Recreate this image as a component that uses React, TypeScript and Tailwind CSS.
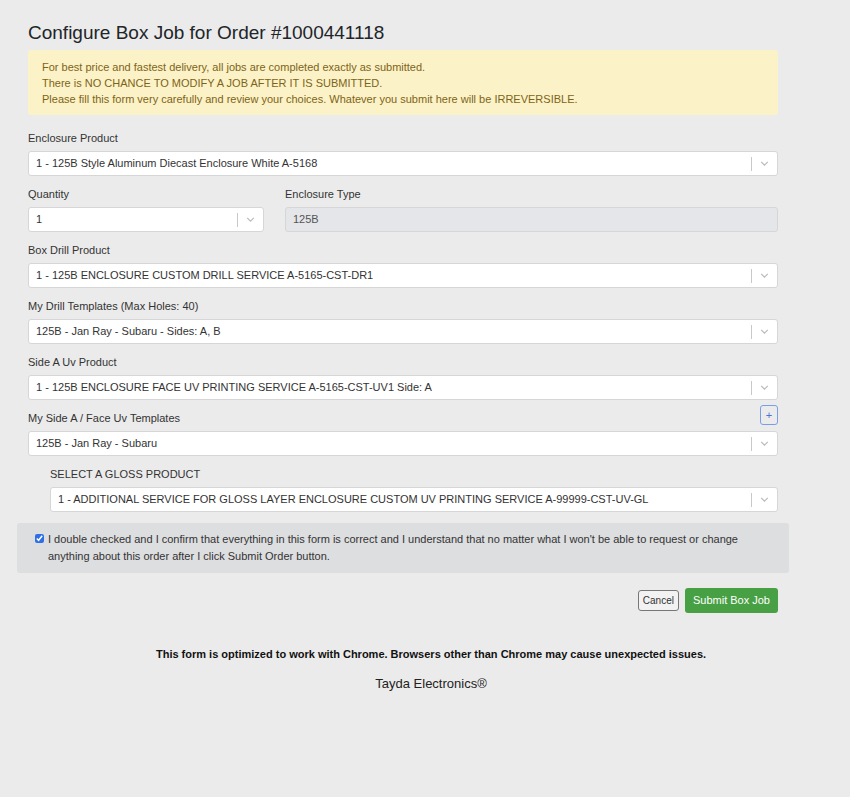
import React from "react";

function Chevron() {
  return (
    <svg width="11" height="11" viewBox="0 0 20 20" className="text-[#b9b9b9]">
      <path d="M4 7 L10 13 L16 7" fill="none" stroke="currentColor" strokeWidth="2" />
    </svg>
  );
}

function Select({ value }: { value: string }) {
  return (
    <div className="flex h-[25px] items-center rounded-[3px] border border-[#d6d6d6] bg-white">
      <div className="flex-1 truncate pl-[7px] text-[11px] text-[#333]">{value}</div>
      <div className="h-[14px] w-px bg-[#c8c8c8]" />
      <div className="flex w-[25px] items-center justify-center">
        <Chevron />
      </div>
    </div>
  );
}

function Label({ children }: { children: React.ReactNode }) {
  return <div className="mb-[6px] text-[11px] leading-[14px] text-[#333]">{children}</div>;
}

export default function App() {
  return (
    <div className="min-h-[797px] bg-[#ebebeb] font-['Liberation_Sans',Arial,sans-serif] text-[#212529]">
      <div className="mx-[28px] w-[750px] pt-[21px]">
        <h1 className="text-[19px] leading-[24px] text-[#212529]">Configure Box Job for Order #1000441118</h1>

        <div className="mt-[5px] rounded-[3px] bg-[#fcf2c7] px-[14px] pb-[8px] pt-[9px] text-[11px] leading-[16px] text-[#7d6418]">
          <div>For best price and fastest delivery, all jobs are completed exactly as submitted.</div>
          <div>There is NO CHANCE TO MODIFY A JOB AFTER IT IS SUBMITTED.</div>
          <div>Please fill this form very carefully and review your choices. Whatever you submit here will be IRREVERSIBLE.</div>
        </div>

        <div className="mt-[16px]">
          <Label>Enclosure Product</Label>
          <Select value="1 - 125B Style Aluminum Diecast Enclosure White A-5168" />
        </div>

        <div className="mt-[11px] flex gap-[21px]">
          <div className="w-[236px]">
            <Label>Quantity</Label>
            <Select value="1" />
          </div>
          <div className="flex-1">
            <Label>Enclosure Type</Label>
            <div className="flex h-[25px] items-center rounded-[3px] border border-[#d6d6d6] bg-[#e4e6e9] pl-[7px] text-[11px] text-[#555]">
              125B
            </div>
          </div>
        </div>

        <div className="mt-[11px]">
          <Label>Box Drill Product</Label>
          <Select value="1 - 125B ENCLOSURE CUSTOM DRILL SERVICE A-5165-CST-DR1" />
        </div>

        <div className="mt-[11px]">
          <Label>My Drill Templates (Max Holes: 40)</Label>
          <Select value="125B - Jan Ray - Subaru - Sides: A, B" />
        </div>

        <div className="mt-[11px]">
          <Label>Side A Uv Product</Label>
          <Select value="1 - 125B ENCLOSURE FACE UV PRINTING SERVICE A-5165-CST-UV1 Side: A" />
        </div>

        <div className="mt-[5px]">
          <div className="flex items-end justify-between">
            <Label>My Side A / Face Uv Templates</Label>
            <div className="mb-[6px] flex h-[20px] w-[18px] items-center justify-center rounded-[3px] border border-[#7b9ee8] text-[11px] leading-none text-[#4a72d8]">
              +
            </div>
          </div>
          <Select value="125B - Jan Ray - Subaru" />
        </div>

        <div className="ml-[22px] mt-[11px]">
          <Label>SELECT A GLOSS PRODUCT</Label>
          <Select value="1 - ADDITIONAL SERVICE FOR GLOSS LAYER ENCLOSURE CUSTOM UV PRINTING SERVICE A-99999-CST-UV-GL" />
        </div>
      </div>

      <div className="mx-[17px] mt-[11px] w-[772px] rounded-[3px] bg-[#dddee0] py-[8px] pl-[18px] pr-[10px]">
        <label className="flex items-start gap-[4px] text-[11px] leading-[17px] text-[#333]">
          <input type="checkbox" defaultChecked className="mt-[3px] h-[9px] w-[9px] accent-[#2f6fe6]" />
          <span>
            I double checked and I confirm that everything in this form is correct and I understand that no matter what I won't be able to request or change anything about this order after I click Submit Order button.
          </span>
        </label>
      </div>

      <div className="mx-[28px] mt-[15px] flex w-[750px] justify-end gap-[6px]">
        <button className="mt-[2px] h-[21px] rounded-[3px] border border-[#777] bg-[#f2f2f2] px-[4px] text-[10px] text-[#333]">
          Cancel
        </button>
        <button className="h-[25px] rounded-[3px] bg-[#48a044] px-[8px] text-[11px] text-white">Submit Box Job</button>
      </div>

      <div className="pl-[12px]">
        <div className="mt-[34px] text-center text-[11px] font-bold leading-[14px] text-[#111]">
          This form is optimized to work with Chrome. Browsers other than Chrome may cause unexpected issues.
        </div>
        <div className="mt-[15px] text-center text-[13px] leading-[16px] text-[#222]">Tayda Electronics®</div>
      </div>
    </div>
  );
}
